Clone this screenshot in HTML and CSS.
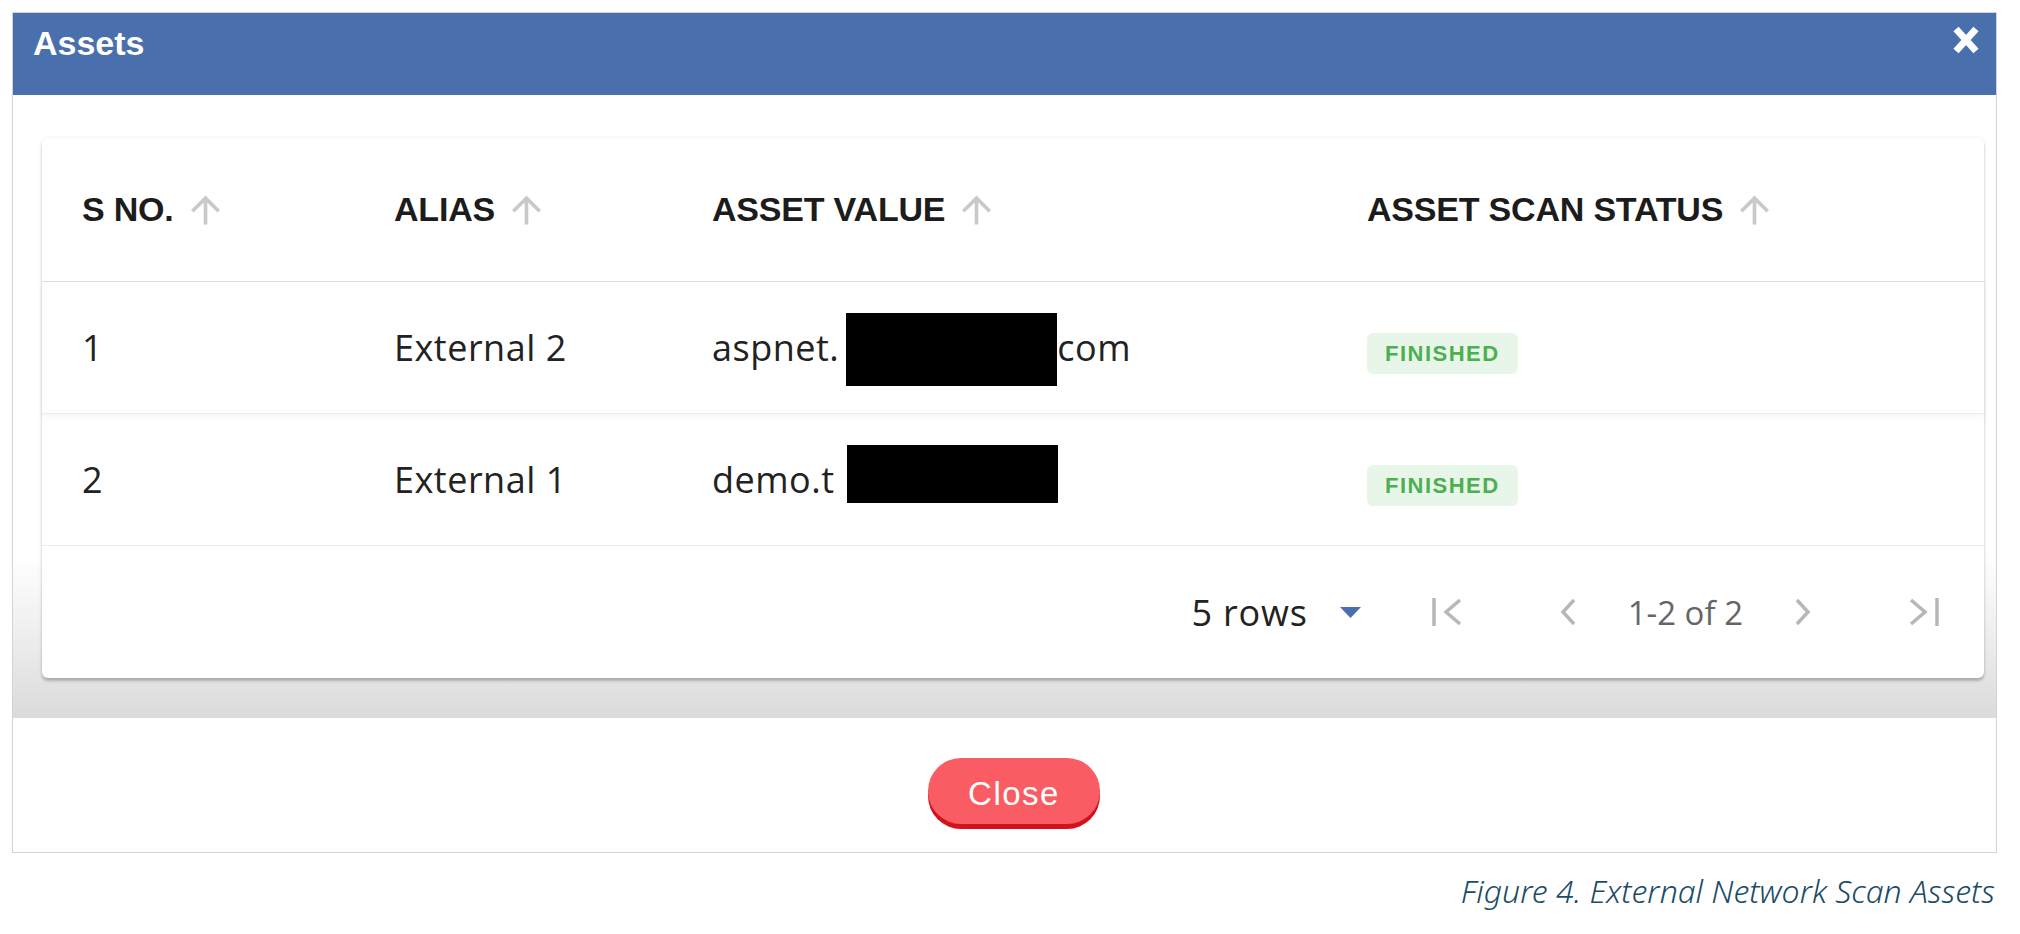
FILE: index.html
```html
<!DOCTYPE html>
<html>
	<head>
		<meta charset="utf-8">
		<title>Assets</title>
		<link rel="stylesheet" href="styles.css">
	</head>
	<body>
		<div class="modal">
			<div class="modal-head">
				<span class="modal-title">Assets</span>
				<svg class="close-x" width="28" height="30" viewBox="0 0 28 30">
					<path d="M4 4 L24 26 M24 4 L4 26" stroke="#fff" stroke-width="7" fill="none"/>
				</svg>
			</div>

			<div class="modal-body">
				<div class="card">
					<div class="row head">
						<div class="cell">S NO.<svg class="sort" viewBox="4 4 16 16"><path d="M4 12l1.41 1.41L11 7.83V20h2V7.83l5.58 5.59L20 12l-8-8-8 8z"/></svg></div>
						<div class="cell">ALIAS<svg class="sort" viewBox="4 4 16 16"><path d="M4 12l1.41 1.41L11 7.83V20h2V7.83l5.58 5.59L20 12l-8-8-8 8z"/></svg></div>
						<div class="cell">ASSET VALUE<svg class="sort" viewBox="4 4 16 16"><path d="M4 12l1.41 1.41L11 7.83V20h2V7.83l5.58 5.59L20 12l-8-8-8 8z"/></svg></div>
						<div class="cell">ASSET SCAN STATUS<svg class="sort" viewBox="4 4 16 16"><path d="M4 12l1.41 1.41L11 7.83V20h2V7.83l5.58 5.59L20 12l-8-8-8 8z"/></svg></div>
					</div>

					<div class="row first">
						<div class="cell">1</div>
						<div class="cell">External 2</div>
						<div class="cell">aspnet.<span class="redact r1"></span>com</div>
						<div class="cell"><span class="badge">FINISHED</span></div>
					</div>

					<div class="row">
						<div class="cell">2</div>
						<div class="cell">External 1</div>
						<div class="cell">demo.t<span class="redact r2"></span></div>
						<div class="cell"><span class="badge">FINISHED</span></div>
					</div>

					<div class="pager">
						<span class="rows-label">5 rows</span>
						<svg class="caret" width="21" height="11" viewBox="0 0 21 11"><polygon points="0,0 21,0 10.5,11" fill="#4a6fae"/></svg>
						<svg class="pg first-pg" width="32" height="32" viewBox="0 0 32 32"><path d="M3 2 V30 M29 4 L15 16 L29 28" stroke="#b7b7b7" stroke-width="3.5" fill="none"/></svg>
						<svg class="pg prev-pg" width="18" height="28" viewBox="0 0 18 28"><path d="M15 2 L4 14 L15 26" stroke="#b7b7b7" stroke-width="3.5" fill="none"/></svg>
						<span class="range">1-2 of 2</span>
						<svg class="pg next-pg" width="18" height="28" viewBox="0 0 18 28"><path d="M3 2 L14 14 L3 26" stroke="#b7b7b7" stroke-width="3.5" fill="none"/></svg>
						<svg class="pg last-pg" width="32" height="32" viewBox="0 0 32 32"><path d="M3 4 L17 16 L3 28 M29 2 V30" stroke="#b7b7b7" stroke-width="3.5" fill="none"/></svg>
					</div>
				</div>
			</div>

			<div class="modal-foot">
				<button class="btn-close">Close</button>
			</div>
		</div>

		<p class="caption">Figure 4. External Network Scan Assets</p>
	</body>
</html>
```

FILE: styles.css
```css
body {
	margin: 0;
	background-color: #fff;
	font-family: "Open Sans", sans-serif;
	color: #222;
}

.modal {
	width: 1983px;
	margin: 12px 0 0 12px;
	border: 1px solid #d4d4d4;
}

.modal-head {
	height: 82px;
	background-color: #4a6fad;
	display: flex;
	justify-content: space-between;
	align-items: flex-start;
	padding: 0 16px 0 20px;
}

.modal-title {
	font-family: "Liberation Sans", Arial, sans-serif;
	font-weight: bold;
	font-size: 34px;
	line-height: 40px;
	padding-top: 10px;
	color: #fff;
}

.close-x {
	margin-top: 12px;
}

.modal-body {
	padding: 43px 12px 40px 29px;
	background: linear-gradient(#fff 0, #fff 74%, #ececec 88%, #dadada 100%);
}

.card {
	background-color: #fff;
	border-radius: 6px;
	box-shadow: 0 3px 3px rgba(0, 0, 0, 0.22), 0 0 4px rgba(0, 0, 0, 0.07);
}

.row {
	display: grid;
	grid-template-columns: 312px 318px 655px 1fr;
	padding-left: 40px;
	height: 131px;
	align-items: center;
	border-bottom: 1px solid #ececec;
	font-size: 36px;
	letter-spacing: 0.5px;
}

.row.head {
	height: 143px;
	border-bottom: 1px solid #dedede;
	font-family: "Liberation Sans", Arial, sans-serif;
	font-weight: bold;
	font-size: 34px;
	letter-spacing: -0.2px;
	color: #1c1c1c;
}

.row.first {
	position: relative;
	box-shadow: 0 3px 6px rgba(0, 0, 0, 0.04);
}

.cell {
	display: flex;
	align-items: center;
	white-space: nowrap;
}

.sort {
	width: 29px;
	height: 30px;
	margin-left: 17px;
	fill: #c9c9c9;
}

.redact {
	display: inline-block;
	width: 211px;
	background-color: #000;
}

.r1 {
	height: 73px;
	margin-left: 7px;
	position: relative;
	top: 2px;
}

.r2 {
	height: 58px;
	margin-left: 12px;
	position: relative;
	top: -6px;
}

.badge {
	display: inline-block;
	padding: 0 18px;
	height: 41px;
	line-height: 41px;
	border-radius: 6px;
	background-color: #e8f6ea;
	color: #4caf50;
	font-family: "Liberation Sans", Arial, sans-serif;
	font-weight: bold;
	font-size: 22px;
	letter-spacing: 1.5px;
	position: relative;
	top: 6px;
}

.pager {
	height: 132px;
	display: flex;
	align-items: center;
	justify-content: flex-end;
	padding-right: 44px;
}

.rows-label {
	font-size: 36px;
	letter-spacing: 0.8px;
	color: #222;
}

.caret {
	margin-left: 32px;
}

.first-pg {
	margin-left: 70px;
}

.prev-pg {
	margin-left: 96px;
}

.range {
	margin-left: 51px;
	font-size: 33px;
	color: #666;
}

.next-pg {
	margin-left: 51px;
}

.last-pg {
	margin-left: 96px;
}

.modal-foot {
	height: 134px;
	display: flex;
	justify-content: center;
	align-items: flex-start;
}

.btn-close {
	margin: 40px 0 0 19px;
	padding-top: 6px;
	width: 172px;
	height: 66px;
	border: none;
	border-radius: 34px;
	background-color: #f95c63;
	box-shadow: 0 5px 0 #d3121f;
	color: #fff;
	font-family: "Liberation Sans", Arial, sans-serif;
	font-size: 33px;
	letter-spacing: 1.5px;
}

.caption {
	margin: 16px 25px 0 0;
	text-align: right;
	font-family: "Noto Sans", sans-serif;
	font-style: italic;
	font-weight: 300;
	font-size: 32px;
	color: #1b4b68;
}
```
